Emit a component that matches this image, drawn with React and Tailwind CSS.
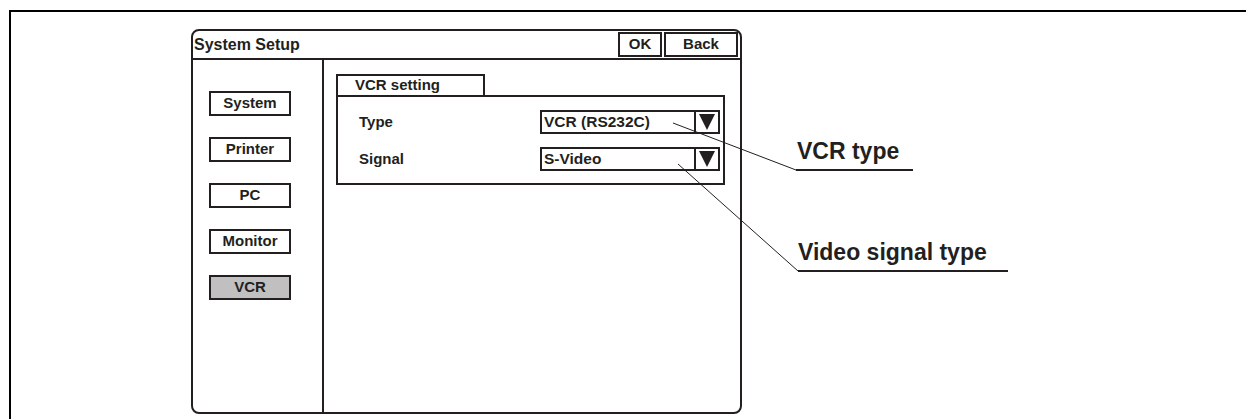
import React from "react";

const font = "font-['Liberation_Sans',Arial,sans-serif]";

function SideBtn({ label, active }) {
  return (
    <div
      className={`w-[82px] h-[25px] border-2 border-[#231f20] flex items-center justify-center text-[15px] font-bold text-[#231f20] ${
        active ? "bg-[#c0c0c0]" : "bg-white"
      }`}
    >
      {label}
    </div>
  );
}

function Select({ value }) {
  return (
    <div className="w-[180px] h-[24px] border-2 border-[#231f20] flex items-stretch bg-white">
      <div className="flex-1 flex items-center pl-[2px] text-[15.5px] font-bold text-[#231f20] leading-none">
        {value}
      </div>
      <div className="w-[24px] border-l-2 border-[#231f20] flex items-center justify-center">
        <svg width="18" height="18" viewBox="0 0 18 18">
          <polygon points="1,1 17,1 9,17" fill="#231f20" />
        </svg>
      </div>
    </div>
  );
}

export default function App() {
  return (
    <div className={`w-[1246px] h-[419px] bg-white overflow-hidden relative ${font}`}>
      <div className="pt-[10px] pl-[9px]">
        <div className="h-[409px] border-t-2 border-l-2 border-black pl-[180px] pt-[17px]">
          {/* Window */}
          <div className="w-[551px] h-[385px] border-2 border-[#231f20] rounded-[8px] flex flex-col">
            <div className="h-[29px] border-b-2 border-[#231f20] flex items-center justify-between">
              <span className="pl-[1px] text-[16px] font-bold text-[#231f20]">System Setup</span>
              <div className="flex gap-[2px] pr-[2px] h-[25px] self-end mb-[1px]">
                <div className="w-[44px] border-2 border-[#231f20] flex items-center justify-center text-[15px] font-bold text-[#231f20]">
                  OK
                </div>
                <div className="w-[74px] border-2 border-[#231f20] flex items-center justify-center text-[15px] font-bold text-[#231f20]">
                  Back
                </div>
              </div>
            </div>
            <div className="flex flex-1">
              <div className="w-[131px] border-r-2 border-[#231f20] pt-[31px] pl-[16px] flex flex-col gap-[21px]">
                <SideBtn label="System" />
                <SideBtn label="Printer" />
                <SideBtn label="PC" />
                <SideBtn label="Monitor" />
                <SideBtn label="VCR" active />
              </div>
              <div className="flex-1 pl-[12px] pt-[14px]">
                <div className="w-[149px] h-[21px] border-2 border-b-0 border-[#231f20] pl-[17px] text-[15px] font-bold text-[#231f20] leading-[18px]">
                  VCR setting
                </div>
                <div className="w-[389px] h-[90px] border-2 border-[#231f20] pl-[21px] pr-[3px] pt-[13px] flex flex-col gap-[13px]">
                  <div className="flex items-center justify-between">
                    <span className="text-[15px] font-bold text-[#231f20]">Type</span>
                    <Select value="VCR (RS232C)" />
                  </div>
                  <div className="flex items-center justify-between">
                    <span className="text-[15px] font-bold text-[#231f20]">Signal</span>
                    <Select value="S-Video" />
                  </div>
                </div>
              </div>
            </div>
          </div>
        </div>
      </div>

      {/* Callout annotations */}
      <svg className="absolute left-0 top-0 pointer-events-none" width="1246" height="419">
        <line x1="673" y1="123" x2="796" y2="170" stroke="#231f20" strokeWidth="1" />
        <line x1="796" y1="170" x2="913" y2="170" stroke="#231f20" strokeWidth="2" />
        <line x1="678" y1="164" x2="798" y2="271" stroke="#231f20" strokeWidth="1" />
        <line x1="798" y1="271" x2="1008" y2="271" stroke="#231f20" strokeWidth="2" />
      </svg>
      <div className="absolute left-[797px] top-[136px] text-[23px] font-bold text-[#231f20] leading-[30px]">VCR type</div>
      <div className="absolute left-[798px] top-[237px] text-[23px] font-bold text-[#231f20] leading-[30px]">Video signal type</div>
    </div>
  );
}
